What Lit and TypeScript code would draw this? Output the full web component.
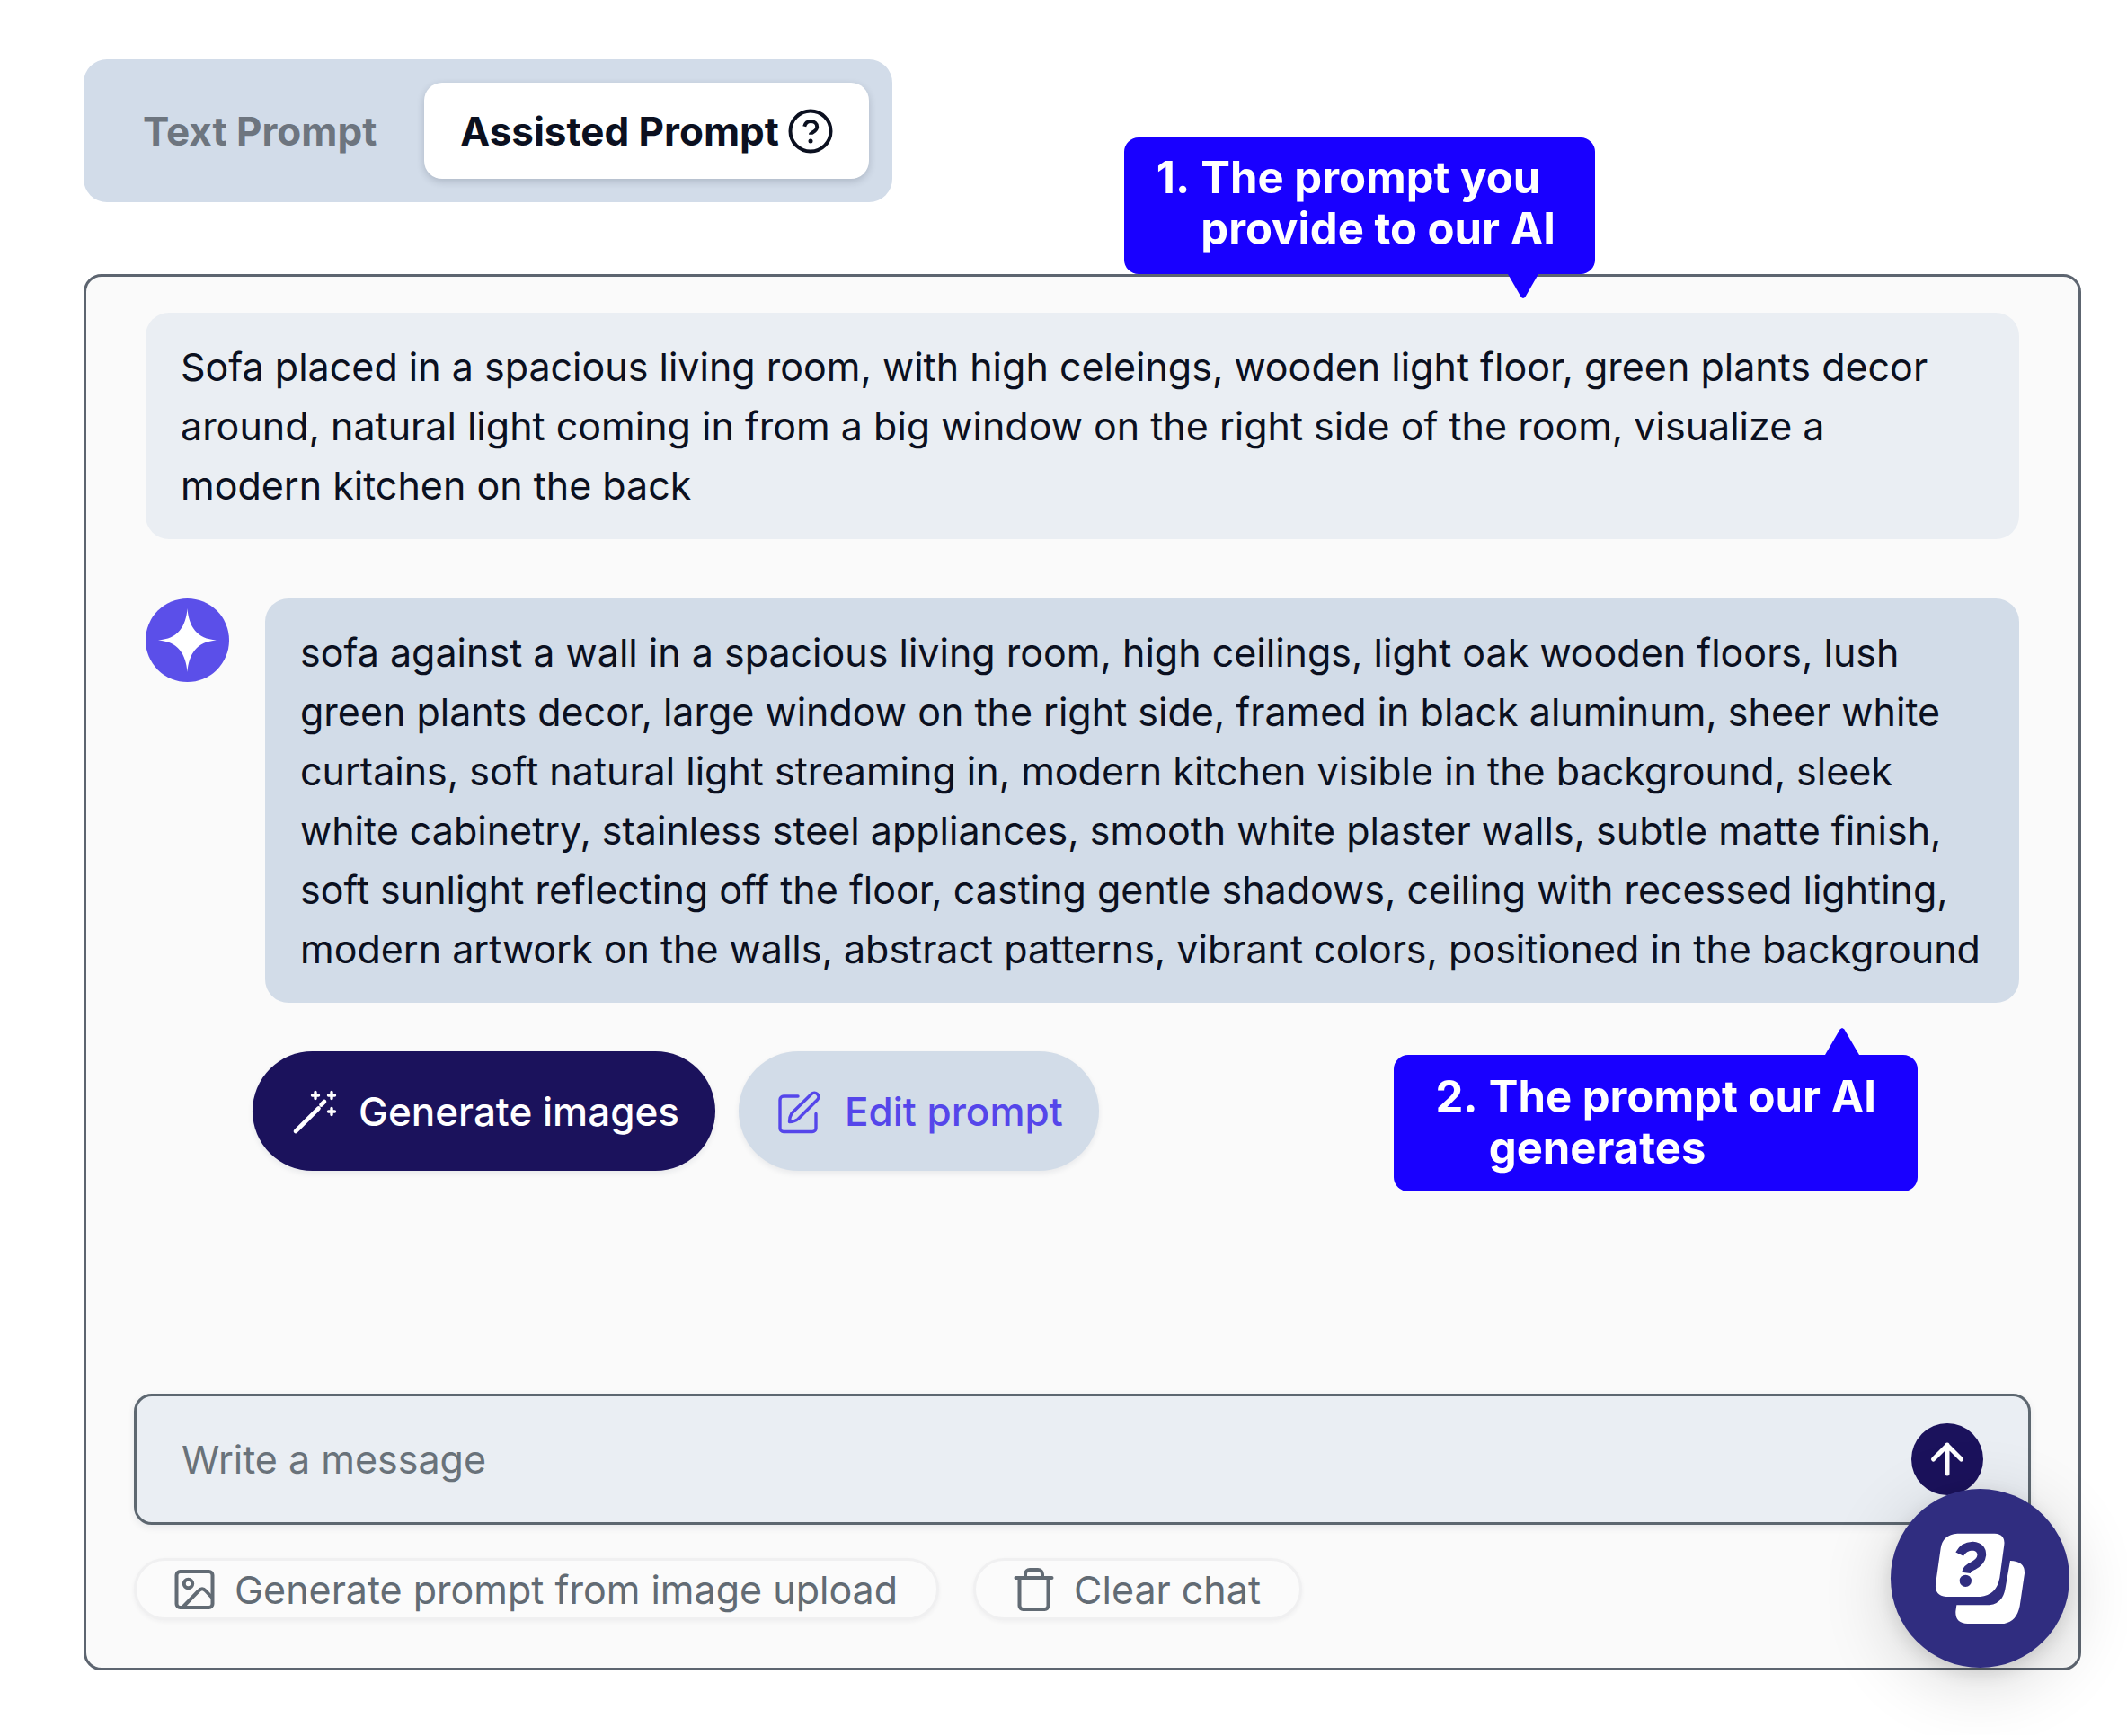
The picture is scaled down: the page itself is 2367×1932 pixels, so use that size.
import { LitElement, html, css, svg } from 'lit';
import { customElement, state } from 'lit/decorators.js';
import { classMap } from 'lit/directives/class-map.js';

type Mode = 'text' | 'assisted';

const helpIcon = svg`<svg class="help-icon" viewBox="0 0 50 50" aria-hidden="true">
  <circle cx="25" cy="25" r="22.5" fill="none" stroke="currentColor" stroke-width="4" />
  <path d="M18.2 19.8C19.2 15.9 22 14 25.2 14c4 0 7 2.600 7 6.200 0 5.400-7.200 6.200-7.200 8.600" fill="none" stroke="currentColor" stroke-width="4" />
  <circle cx="25" cy="36" r="2.500" fill="currentColor" />
</svg>`;

const sparkIcon = svg`<svg class="spark-icon" viewBox="0 0 93 93" aria-hidden="true">
  <path d="M46.500 11C48 31 57 45 79 46.500 57 48 48 62 46.500 82 45 62 36 48 14 46.500 36 45 45 31 46.500 11Z" fill="#fff" />
</svg>`;

const wandIcon = svg`<svg class="action-icon" viewBox="0 0 56 56" fill="none" stroke="currentColor" stroke-linecap="round" aria-hidden="true">
  <path d="M8 50 33.500 24.500M36.500 20.500 40 17" stroke-width="4.600" />
  <path d="M30 6.500v7M26.500 10h7M48 6.500v7M44.500 10h7M48 24.500v7M44.500 28h7" stroke-width="3.400" />
</svg>`;

const editIcon = svg`<svg class="action-icon" viewBox="0 0 56 56" fill="none" stroke="currentColor" stroke-width="3.400" stroke-linecap="round" stroke-linejoin="round" aria-hidden="true">
  <path d="M26 11H10a4 4 0 0 0-4 4V46.500a4 4 0 0 0 4 4h32a4 4 0 0 0 4-4V30.500" />
  <path d="M19 30 41 8.500a3.900 3.900 0 0 1 6.500 6.500L26 36.500Q22 39.500 16.500 39.500 16.500 34 19 30Z" />
</svg>`;

const imageIcon = svg`<svg class="chip-icon" viewBox="0 0 45 48" fill="none" stroke="currentColor" stroke-width="4" stroke-linejoin="round" aria-hidden="true">
  <rect x="2.500" y="4" width="40" height="40" rx="4" />
  <circle cx="15.500" cy="17.500" r="4.700" />
  <path d="M10 43 27 25.500q4-4.500 8 0l7.500 8" />
</svg>`;

const trashIcon = svg`<svg class="chip-icon" viewBox="0 0 45 48" fill="none" stroke="currentColor" stroke-width="4" stroke-linecap="round" stroke-linejoin="round" aria-hidden="true">
  <path d="M2.500 11h40M6.500 11v31a4 4 0 0 0 4 4h24a4 4 0 0 0 4-4V11M13 11V7a5 5 0 0 1 5-5h9a5 5 0 0 1 5 5v4" />
</svg>`;

const arrowIcon = svg`<svg class="send-icon" viewBox="0 0 80 80" fill="none" stroke="currentColor" stroke-width="5" stroke-linecap="round" stroke-linejoin="round" aria-hidden="true">
  <path d="M40 56V24M24.500 40 40 24.500 55.500 40" />
</svg>`;

const supportIcon = svg`<svg class="support-icon" viewBox="223 379 597 597" aria-hidden="true">
  <path d="M446 528H570Q606 530 602 566L587 676Q576 734 522 739H408Q370 736 373 698L390 578Q396 532 446 528Z" fill="#fff" />
  <path d="M622 619Q672 620 670 662L654 770Q644 822 602 829H480Q438 828 440 788L443 767H552Q596 762 605 715Z" fill="#fff" />
  <path d="M453 597Q466 571 497 570 527 573 527 600 525 622 498 636 477 645 475 659" fill="none" stroke="#302d80" stroke-width="29" />
  <circle cx="473" cy="686" r="20" fill="#302d80" />
</svg>`;

@customElement('app-root')
export class AppRoot extends LitElement {
  static styles = css`
    :host {
      display: block;
      box-sizing: border-box;
      padding: 66px 51px 72px 93px;
      background: #fff;
      color: #0b1020;
      font-family: Inter, 'Liberation Sans', sans-serif;
      font-size: 43px;
      line-height: 66px;
    }
    *,
    *::before,
    *::after {
      box-sizing: border-box;
    }
    button,
    input {
      margin: 0;
      font: inherit;
      color: inherit;
    }
    button {
      display: flex;
      align-items: center;
      border: 0;
      background: none;
      cursor: pointer;
      white-space: nowrap;
    }
    svg {
      display: block;
      flex: none;
    }
    .tabs {
      display: flex;
      gap: 13px;
      width: fit-content;
      padding: 26px;
      border-radius: 26px;
      background: #d2dce9;
    }
    .tab {
      gap: 10px;
      height: 107px;
      padding: 0 40px;
      border-radius: 20px;
      color: #6d757f;
      font-weight: 700;
      font-size: 44px;
    }
    .tab.selected {
      background: #fff;
      color: #0b1020;
      box-shadow: 0 3px 8px rgba(30, 41, 59, 0.2);
    }
    .help-icon {
      width: 50px;
      height: 50px;
    }
    .panel {
      position: relative;
      margin-top: 80px;
      padding: 40px 53px 53px;
      border: 3px solid #5d6570;
      border-radius: 20px;
      background: #fafafa;
    }
    .conversation {
      display: flex;
      flex-direction: column;
      padding: 0 13px 248px;
    }
    .bubble {
      margin: 0;
      padding: 27px 39px;
      border-radius: 26px;
      background: #eaeef3;
    }
    .bubble.sent {
      padding-right: 66px;
    }
    .reply {
      display: flex;
      align-items: flex-start;
      gap: 40px;
      margin-top: 66px;
    }
    .reply .bubble {
      flex: 1;
      background: #d2dce8;
    }
    .avatar {
      width: 93px;
      height: 93px;
      border-radius: 50%;
      background: #5b4fe9;
    }
    .spark-icon {
      width: 93px;
      height: 93px;
    }
    .actions {
      position: relative;
      display: flex;
      gap: 26px;
      margin-top: 54px;
      padding-left: 119px;
    }
    .action {
      gap: 22px;
      height: 133px;
      padding: 0 40px;
      border-radius: 67px;
      background: #d2dce8;
      color: #5546ea;
      font-weight: 500;
      font-size: 44px;
      box-shadow: 0 3px 6px rgba(30, 41, 59, 0.08);
    }
    .action.primary {
      background: #1b125c;
      color: #fff;
    }
    .action-icon {
      width: 56px;
      height: 56px;
    }
    .callout {
      position: absolute;
      display: flex;
      gap: 12px;
      padding: 18px 44px 20px 36px;
      border-radius: 16px;
      background: #1900ff;
      color: #fff;
      font-weight: 700;
      font-size: 49px;
      line-height: 57px;
      white-space: nowrap;
    }
    .callout::after {
      content: '';
      position: absolute;
      width: 34px;
      height: 27px;
      background: #1900ff;
      clip-path: polygon(0 0, 100% 0, 56% 96%, 50% 100%, 44% 96%);
    }
    .callout.given {
      right: 538px;
      bottom: calc(100% + 3px);
      padding-top: 16px;
      padding-bottom: 22px;
    }
    .callout.given::after {
      top: 100%;
      right: 63px;
    }
    .callout.generated {
      top: 4px;
      right: 113px;
      padding-left: 46px;
      padding-right: 46px;
    }
    .callout.generated::after {
      right: 65px;
      bottom: 100%;
      width: 38px;
      height: 30px;
      clip-path: polygon(0 100%, 100% 100%, 56% 4%, 50% 0, 44% 4%);
    }
    .composer {
      display: flex;
      align-items: center;
      height: 146px;
      padding: 0 50px;
      border: 3px solid #5d6770;
      border-radius: 20px;
      background: #eaeef3;
      box-shadow: 0 3px 8px rgba(30, 41, 59, 0.08);
    }
    .composer input {
      flex: 1;
      min-width: 0;
      height: 100px;
      padding: 0;
      border: 0;
      outline: 0;
      background: none;
    }
    .composer input::placeholder {
      color: #69727a;
      opacity: 1;
    }
    .send {
      padding: 0;
      border-radius: 50%;
      background: #1b125c;
      color: #fff;
    }
    .send-icon {
      width: 80px;
      height: 80px;
    }
    .chips {
      display: flex;
      gap: 38px;
      margin-top: 37px;
    }
    .chip {
      gap: 22px;
      height: 69px;
      padding: 0 43px 0 42px;
      border: 3px solid #f0f0f1;
      border-radius: 35px;
      background: #fbfbfb;
      color: #626b74;
      box-shadow: 0 2px 5px rgba(30, 41, 59, 0.05);
    }
    .chip-icon {
      width: 45px;
      height: 48px;
    }
    .support {
      position: absolute;
      right: 10px;
      bottom: 0;
      padding: 0;
      border-radius: 50%;
      background: #302d80;
      box-shadow: 0 16px 80px rgba(0, 0, 0, 0.16), 0 6px 20px rgba(0, 0, 0, 0.12);
    }
    .support-icon {
      width: 199px;
      height: 199px;
    }
  `;

  @state() private mode: Mode = 'assisted';

  private tab(mode: Mode, label: string, icon: unknown = '') {
    const selected = this.mode === mode;
    return html`<button
      class=${classMap({ tab: true, selected })}
      role="tab"
      aria-selected=${selected ? 'true' : 'false'}
      @click=${() => (this.mode = mode)}
    ><span>${label}</span>${icon}</button>`;
  }

  render() {
    return html`
      <div class="tabs" role="tablist">
        ${this.tab('text', 'Text Prompt')}
        ${this.tab('assisted', 'Assisted Prompt', helpIcon)}
      </div>
      <main class="panel">
        <section class="conversation">
          <p class="bubble sent">Sofa placed in a spacious living room, with high celeings, wooden light floor, green plants decor around, natural light coming in from a big window on the right side of the room, visualize a modern kitchen on the back</p>
          <div class="reply">
            <div class="avatar">${sparkIcon}</div>
            <p class="bubble">sofa against a wall in a spacious living room, high ceilings, light oak wooden floors, lush green plants decor, large window on the right side, framed in black aluminum, sheer white curtains, soft natural light streaming in, modern kitchen visible in the background, sleek white cabinetry, stainless steel appliances, smooth white plaster walls, subtle matte finish, soft sunlight reflecting off the floor, casting gentle shadows, ceiling with recessed lighting, modern artwork on the walls, abstract patterns, vibrant colors, positioned in the background</p>
          </div>
          <div class="actions">
            <button class="action primary">${wandIcon}<span>Generate images</span></button>
            <button class="action">${editIcon}<span>Edit prompt</span></button>
            <div class="callout generated"><span>2.</span><span>The prompt our AI<br />generates</span></div>
          </div>
        </section>
        <form class="composer" @submit=${(e: Event) => e.preventDefault()}>
          <input type="text" aria-label="Write a message" placeholder="Write a message" />
          <button class="send" aria-label="Send">${arrowIcon}</button>
        </form>
        <div class="chips">
          <button class="chip">${imageIcon}<span>Generate prompt from image upload</span></button>
          <button class="chip">${trashIcon}<span>Clear chat</span></button>
        </div>
        <div class="callout given"><span>1.</span><span>The prompt you<br />provide to our AI</span></div>
        <button class="support" aria-label="Help">${supportIcon}</button>
      </main>
    `;
  }
}
